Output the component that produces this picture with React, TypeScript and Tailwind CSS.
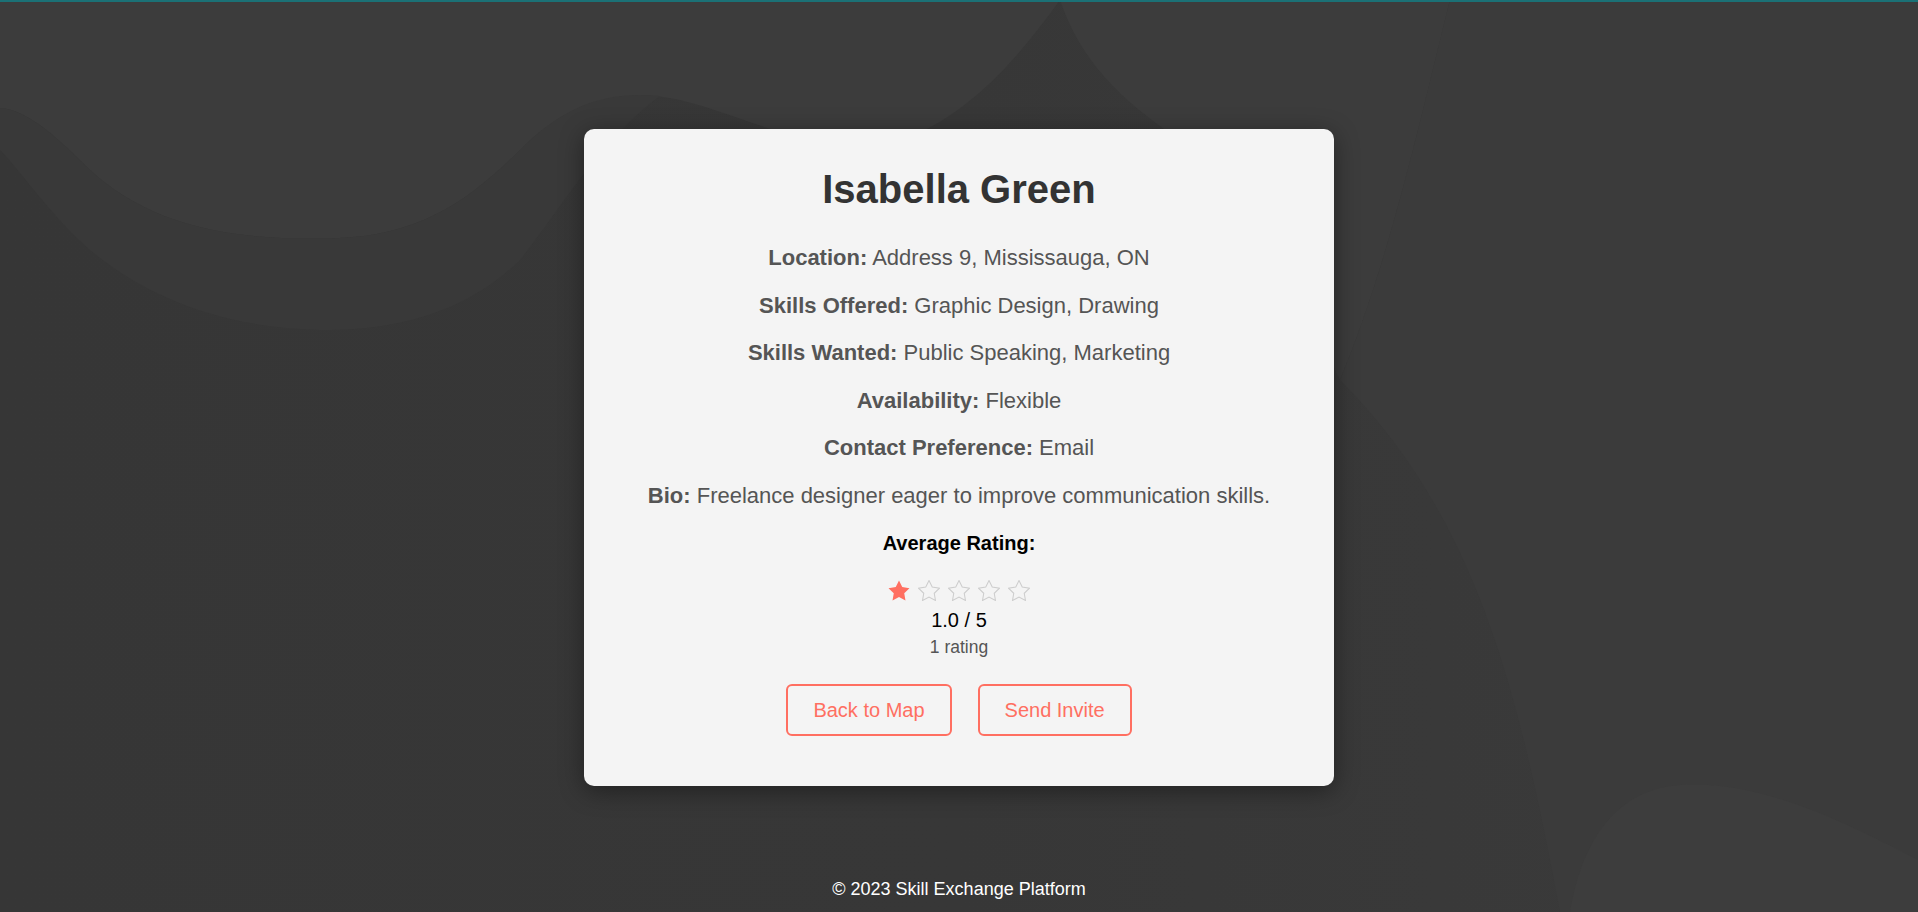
import React from 'react';

function Star({ filled }: { filled: boolean }) {
  return (
    <svg width="22" height="21" viewBox="1.5 1.5 21 20" className="block">
      <polygon
        points="12,2 15.09,8.26 22,9.27 17,14.14 18.18,21.02 12,17.77 5.82,21.02 7,14.14 2,9.27 8.91,8.26"
        fill={filled ? '#ff6f61' : 'none'}
        stroke={filled ? '#ff6f61' : '#cdcdcd'}
        strokeWidth={filled ? 0 : 1}
        strokeLinejoin="miter"
      />
    </svg>
  );
}

function Background() {
  return (
    <svg
      className="absolute inset-0 h-full w-full"
      viewBox="0 0 1918 912"
      preserveAspectRatio="none"
    >
      <defs>
        <linearGradient id="bg" x1="0" y1="0" x2="1" y2="0">
          <stop offset="0" stopColor="#363636" />
          <stop offset="0.5" stopColor="#373737" />
          <stop offset="1" stopColor="#3b3b3b" />
        </linearGradient>
      </defs>
      <rect width="1918" height="912" fill="url(#bg)" />
      {/* top-left lighter wave */}
      <path
        d="M0,0 H1060 C1010,70 960,120 900,140 C820,160 760,120 680,100 C610,85 560,110 520,150 C470,200 420,235 340,238 C230,242 150,225 90,170 C50,130 25,110 0,108 Z"
        fill="#3c3c3c"
      />
      <path
        d="M0,108 C25,110 50,130 90,170 C150,225 230,242 340,238 C420,235 470,200 520,150 C560,110 600,90 660,96 C600,140 560,210 520,260 C470,310 400,330 330,330 C230,330 150,300 90,250 C50,215 20,170 0,150 Z"
        fill="#393939"
      />
      {/* soft band from the top right */}
      <path
        d="M1060,0 H1450 C1420,120 1390,260 1340,380 C1300,300 1260,200 1180,140 C1120,100 1080,60 1060,0 Z"
        fill="#3c3c3c"
      />
      <path d="M1450,0 H1918 V912 H1560 C1520,700 1480,520 1340,380 C1390,260 1420,120 1450,0 Z" fill="#3b3b3b" />
      {/* bottom right blob */}
      <path
        d="M1570,912 C1580,850 1610,790 1680,785 C1760,780 1840,820 1918,860 V912 Z"
        fill="#3d3d3d"
      />
    </svg>
  );
}

export default function App() {
  const rating = 1;
  return (
    <div
      className="relative flex h-[912px] w-full flex-col overflow-hidden bg-[#373737]"
      style={{ fontFamily: '"Liberation Sans", Arial, sans-serif' }}
    >
      <Background />
      <div className="relative h-[2px] w-full bg-[#1b7176]" />

      <main className="relative flex justify-center pt-[127px]">
        <div className="w-[750px] rounded-[10px] bg-[#f4f4f4] px-[37px] pt-[37px] pb-[50px] text-center shadow-[0_5px_25px_rgba(0,0,0,0.4)]">
          <h1 className="text-[40px] leading-[46px] font-bold text-[#333]">Isabella Green</h1>

          <div className="mt-[33px] flex flex-col gap-[22px] text-[22px] leading-[25.6px] text-[#555]">
            <p>
              <span className="font-bold">Location:</span> Address 9, Mississauga, ON
            </p>
            <p>
              <span className="font-bold">Skills Offered:</span> Graphic Design, Drawing
            </p>
            <p>
              <span className="font-bold">Skills Wanted:</span> Public Speaking, Marketing
            </p>
            <p>
              <span className="font-bold">Availability:</span> Flexible
            </p>
            <p>
              <span className="font-bold">Contact Preference:</span> Email
            </p>
            <p>
              <span className="font-bold">Bio:</span> Freelance designer eager to improve communication skills.
            </p>
          </div>

          <h3 className="mt-[23px] text-[20px] leading-[23px] font-bold text-black">Average Rating:</h3>

          <div className="mt-[25px] flex h-[21px] justify-center gap-[8px]">
            {[1, 2, 3, 4, 5].map((i) => (
              <Star key={i} filled={i <= rating} />
            ))}
          </div>
          <div className="mt-[8px] text-[20px] leading-[23px] text-black">1.0 / 5</div>
          <div className="mt-[5.5px] text-[17.5px] leading-[20px] text-[#555]">1 rating</div>

          <div className="mt-[27px] flex justify-center gap-[26px]">
            <button className="rounded-[6px] border-2 border-[#ff6f61] bg-transparent px-[25px] py-[12.5px] text-[20px] leading-[23px] text-[#ff6f61]">
              Back to Map
            </button>
            <button className="rounded-[6px] border-2 border-[#ff6f61] bg-transparent px-[25px] py-[12.5px] text-[20px] leading-[23px] text-[#ff6f61]">
              Send Invite
            </button>
          </div>
        </div>
      </main>

      <footer className="relative mt-auto pb-[12px] text-center text-[18px] leading-[21px] text-white">
        © 2023 Skill Exchange Platform
      </footer>
    </div>
  );
}
